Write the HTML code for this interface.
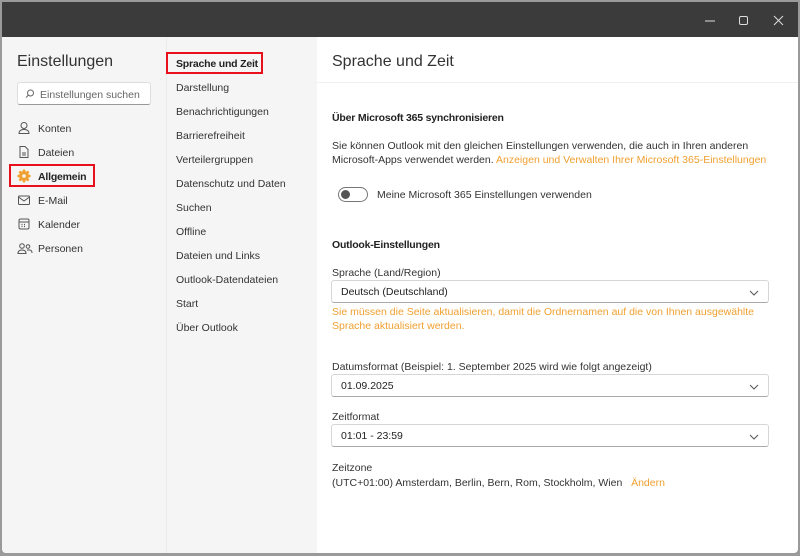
<!DOCTYPE html>
<html><head><meta charset="utf-8"><style>
*{margin:0;padding:0;box-sizing:border-box}
body{width:800px;height:556px;background:#9a9a9a;font-family:"Liberation Sans",sans-serif;font-size:10.5px;color:#333;position:relative;overflow:hidden}
.win{position:absolute;left:2px;top:2px;width:796px;height:551px;background:#fff;overflow:hidden;border-radius:0 0 4px 4px}
.tb{position:absolute;left:0;top:0;width:796px;height:35px;background:#3b3b3b}
.left{position:absolute;left:0;top:35px;width:315px;height:516px;background:#f5f5f5}
.sep{position:absolute;left:164px;top:35px;width:1px;height:516px;background:#ebebeb}
.a{position:absolute;white-space:nowrap;margin-top:1px}
.b{font-weight:bold;letter-spacing:-0.2px}
.or{color:#f0a030}
.sel{position:absolute;left:331px;width:438px;height:23px;border:1px solid #d6d6d6;border-bottom:1px solid #aaa;border-radius:3px;background:#fff}
.sel span{position:absolute;left:9px;top:5px;color:#222}
.sel svg{position:absolute;right:9px;top:9px}
.ic{position:absolute;left:17px}
</style></head><body>
<div class="win">
<div class="tb">
<svg style="position:absolute;left:702px;top:13px" width="12" height="12"><line x1="1" y1="6" x2="11" y2="6" stroke="#ddd" stroke-width="1"/></svg>
<svg style="position:absolute;left:736px;top:13px" width="12" height="12"><rect x="1.5" y="1.5" width="8" height="8" rx="1.5" fill="none" stroke="#ddd"/></svg>
<svg style="position:absolute;left:771px;top:13px" width="12" height="12"><path d="M1 1L10 10M10 1L1 10" stroke="#ddd"/></svg>
</div>
<div class="left"></div><div class="sep"></div>
</div>
<div class="a" style="left:17px;top:52px;font-size:16px;color:#333">Einstellungen</div>
<div style="position:absolute;left:17px;top:82px;width:134px;height:23px;background:#fff;border:1px solid #ddd;border-bottom-color:#999;border-radius:3px"></div>
<svg style="position:absolute;left:25px;top:89px" width="10" height="10"><circle cx="5.5" cy="4" r="3" fill="none" stroke="#666"/><line x1="3.5" y1="6" x2="1" y2="8.5" stroke="#666"/></svg>
<div class="a" style="left:40px;top:88px;color:#666">Einstellungen suchen</div>

<svg class="ic" style="top:121px" width="14" height="14" fill="none" stroke="#555"><circle cx="7" cy="4.5" r="3"/><path d="M2 12.5c0-3 2-4 5-4s5 1 5 4z"/></svg>
<div class="a" style="left:38px;top:122px">Konten</div>
<svg class="ic" style="top:145px" width="14" height="14" fill="none" stroke="#555"><path d="M3 1.5h5l3 3v8H3z"/><path d="M5 8h4M5 10h4"/></svg>
<div class="a" style="left:38px;top:146px">Dateien</div>
<div style="position:absolute;left:9px;top:164px;width:86px;height:23px;border:2px solid #e8101a"></div>
<svg class="ic" style="top:169px" width="14" height="14"><circle cx="7" cy="7" r="5" fill="#f0a030"/><g stroke="#f0a030" stroke-width="2.4"><line x1="7" y1="0.5" x2="7" y2="13.5"/><line x1="0.5" y1="7" x2="13.5" y2="7"/><line x1="2.4" y1="2.4" x2="11.6" y2="11.6"/><line x1="11.6" y1="2.4" x2="2.4" y2="11.6"/></g><circle cx="7" cy="7" r="1.8" fill="#f5f5f5"/></svg>
<div class="a b" style="left:38px;top:170px;color:#222">Allgemein</div>
<svg class="ic" style="top:193px" width="14" height="14" fill="none" stroke="#555"><rect x="1.5" y="3" width="11" height="8.5" rx="1"/><path d="M1.5 4l5.5 4 5.5-4"/></svg>
<div class="a" style="left:38px;top:194px">E-Mail</div>
<svg class="ic" style="top:217px" width="14" height="14" fill="none" stroke="#555"><rect x="2" y="2" width="10" height="10" rx="1.5"/><path d="M2 5h10"/><path d="M4.5 7.5h1M7 7.5h1M4.5 9.5h1M7 9.5h1" stroke-width="1.2"/></svg>
<div class="a" style="left:38px;top:218px">Kalender</div>
<svg class="ic" style="top:241px" width="16" height="14" fill="none" stroke="#555"><circle cx="5" cy="5" r="2.3"/><circle cx="11" cy="5.5" r="1.8"/><path d="M1 12.5c0-2.5 1.5-3.5 4-3.5s4 1 4 3.5zM10 9h2.5c1.5 0 2.5 1 2.5 3"/></svg>
<div class="a" style="left:38px;top:242px">Personen</div>

<div style="position:absolute;left:166px;top:52px;width:97px;height:22px;border:2px solid #e8101a"></div>
<div class="a b" style="left:176px;top:57px;color:#222">Sprache und Zeit</div>
<div class="a" style="left:176px;top:81px">Darstellung</div>
<div class="a" style="left:176px;top:105px">Benachrichtigungen</div>
<div class="a" style="left:176px;top:129px">Barrierefreiheit</div>
<div class="a" style="left:176px;top:153px">Verteilergruppen</div>
<div class="a" style="left:176px;top:177px">Datenschutz und Daten</div>
<div class="a" style="left:176px;top:201px">Suchen</div>
<div class="a" style="left:176px;top:225px">Offline</div>
<div class="a" style="left:176px;top:249px">Dateien und Links</div>
<div class="a" style="left:176px;top:273px">Outlook-Datendateien</div>
<div class="a" style="left:176px;top:297px">Start</div>
<div class="a" style="left:176px;top:321px">Über Outlook</div>

<div class="a" style="left:332px;top:52px;font-size:16px;color:#333">Sprache und Zeit</div>
<div style="position:absolute;left:317px;top:82px;width:481px;height:1px;background:#f0f0f0"></div>
<div class="a b" style="left:332px;top:111px;color:#222">Über Microsoft 365 synchronisieren</div>
<div class="a" style="left:332px;top:139px">Sie können Outlook mit den gleichen Einstellungen verwenden, die auch in Ihren anderen</div>
<div class="a" style="left:332px;top:153px">Microsoft-Apps verwendet werden. <span class="or">Anzeigen und Verwalten Ihrer Microsoft 365-Einstellungen</span></div>
<div style="position:absolute;left:338px;top:187px;width:30px;height:15px;border:1px solid #777;border-radius:8px;background:#fff"></div>
<div style="position:absolute;left:341px;top:190px;width:9px;height:9px;border-radius:50%;background:#555"></div>
<div class="a" style="left:377px;top:188px">Meine Microsoft 365 Einstellungen verwenden</div>
<div class="a b" style="left:332px;top:238px;color:#222">Outlook-Einstellungen</div>
<div class="a" style="left:332px;top:266px">Sprache (Land/Region)</div>
<div class="sel" style="top:280px"><span>Deutsch (Deutschland)</span><svg width="10" height="6"><path d="M1 1l4 4 4-4" fill="none" stroke="#555"/></svg></div>
<div class="a or" style="left:332px;top:305px">Sie müssen die Seite aktualisieren, damit die Ordnernamen auf die von Ihnen ausgewählte</div>
<div class="a or" style="left:332px;top:319px">Sprache aktualisiert werden.</div>
<div class="a" style="left:332px;top:360px">Datumsformat (Beispiel: 1. September 2025 wird wie folgt angezeigt)</div>
<div class="sel" style="top:374px"><span>01.09.2025</span><svg width="10" height="6"><path d="M1 1l4 4 4-4" fill="none" stroke="#555"/></svg></div>
<div class="a" style="left:332px;top:410px">Zeitformat</div>
<div class="sel" style="top:424px"><span>01:01 - 23:59</span><svg width="10" height="6"><path d="M1 1l4 4 4-4" fill="none" stroke="#555"/></svg></div>
<div class="a" style="left:332px;top:461px">Zeitzone</div>
<div class="a" style="left:332px;top:476px">(UTC+01:00) Amsterdam, Berlin, Bern, Rom, Stockholm, Wien &nbsp; <span class="or">Ändern</span></div>
</body></html>
